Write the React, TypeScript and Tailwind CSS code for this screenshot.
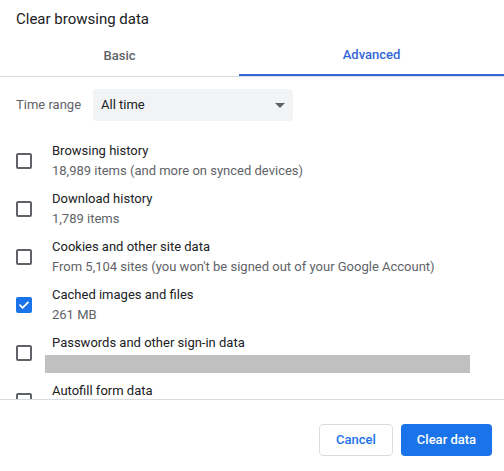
const font = "font-['Roboto','Liberation_Sans',sans-serif]";

type Item = {
  label: string;
  sub?: string;
  checked?: boolean;
  redacted?: boolean;
};

const items: Item[] = [
  { label: "Browsing history", sub: "18,989 items (and more on synced devices)" },
  { label: "Download history", sub: "1,789 items" },
  {
    label: "Cookies and other site data",
    sub: "From 5,104 sites (you won't be signed out of your Google Account)",
  },
  { label: "Cached images and files", sub: "261 MB", checked: true },
  { label: "Passwords and other sign-in data", redacted: true },
  { label: "Autofill form data", sub: "" },
];

const Checkbox = ({ checked }: { checked?: boolean }) => {
  if (checked) {
    return (
      <div className="w-4 h-4 shrink-0 rounded-[2px] bg-[#1a73e8] flex items-center justify-center">
        <svg width="16" height="16" viewBox="0 0 16 16" fill="none">
          <path
            d="M4 8.2l2.6 2.6L12 5.4"
            stroke="white"
            strokeWidth="1.8"
            strokeLinecap="round"
            strokeLinejoin="round"
          />
        </svg>
      </div>
    );
  }
  return (
    <div className="w-4 h-4 shrink-0 rounded-[2px] border-2 border-[#5f6368]"></div>
  );
};

const Row = ({ item }: { item: Item }) => {
  return (
    <div className="h-12 flex items-center pl-4 shrink-0">
      <Checkbox checked={item.checked} />
      <div className="ml-5 flex flex-col h-10 justify-start">
        <div className="text-[13px] leading-5 text-[#202124]">{item.label}</div>
        {item.redacted ? (
          <div className="mt-[2px] -ml-[7px] h-[18px] w-[425px] bg-[#c0c0c0]"></div>
        ) : (
          <div className="text-[13px] leading-5 text-[#5f6368] whitespace-nowrap">
            {item.sub}
          </div>
        )}
      </div>
    </div>
  );
};

export default function App() {
  return (
    <div className={`${font} w-[504px] h-[471px] bg-white flex flex-col overflow-hidden`}>
      <div className="h-9 pt-[9px] pl-4 text-[15px] leading-5 text-[#202124] shrink-0">
        Clear browsing data
      </div>

      <div className="h-[41px] flex border-b border-[#dadce0] shrink-0">
        <div className="w-[239px] flex items-center justify-center text-[13px] font-medium text-[#5f6368]">
          Basic
        </div>
        <div className="flex-1 flex items-center justify-center text-[13px] font-medium text-[#3367d6] border-b-2 border-[#3367d6]">
          Advanced
        </div>
      </div>

      <div className="h-[322px] overflow-hidden flex flex-col shrink-0">
        <div className="mt-3 mb-4 h-8 flex items-center pl-4 shrink-0">
          <div className="w-[77px] text-[13px] text-[#5f6368]">Time range</div>
          <div className="w-[200px] h-8 rounded-[4px] bg-[#f1f3f4] flex items-center justify-between pl-2 pr-2">
            <span className="text-[13px] text-[#202124]">All time</span>
            <svg width="10" height="5" viewBox="0 0 10 5">
              <path d="M0 0h10L5 5z" fill="#5f6368" />
            </svg>
          </div>
        </div>
        {items.map((item) => (
          <Row key={item.label} item={item} />
        ))}
      </div>

      <div className="border-t border-[#dadce0] pt-6 pr-3 flex justify-end gap-2">
        <button className="w-[74px] h-8 rounded-[4px] border border-[#dadce0] bg-white text-[13px] font-medium text-[#1a73e8]">
          Cancel
        </button>
        <button className="w-[91px] h-8 rounded-[4px] bg-[#1a73e8] text-[13px] font-medium text-white">
          Clear data
        </button>
      </div>
    </div>
  );
}
